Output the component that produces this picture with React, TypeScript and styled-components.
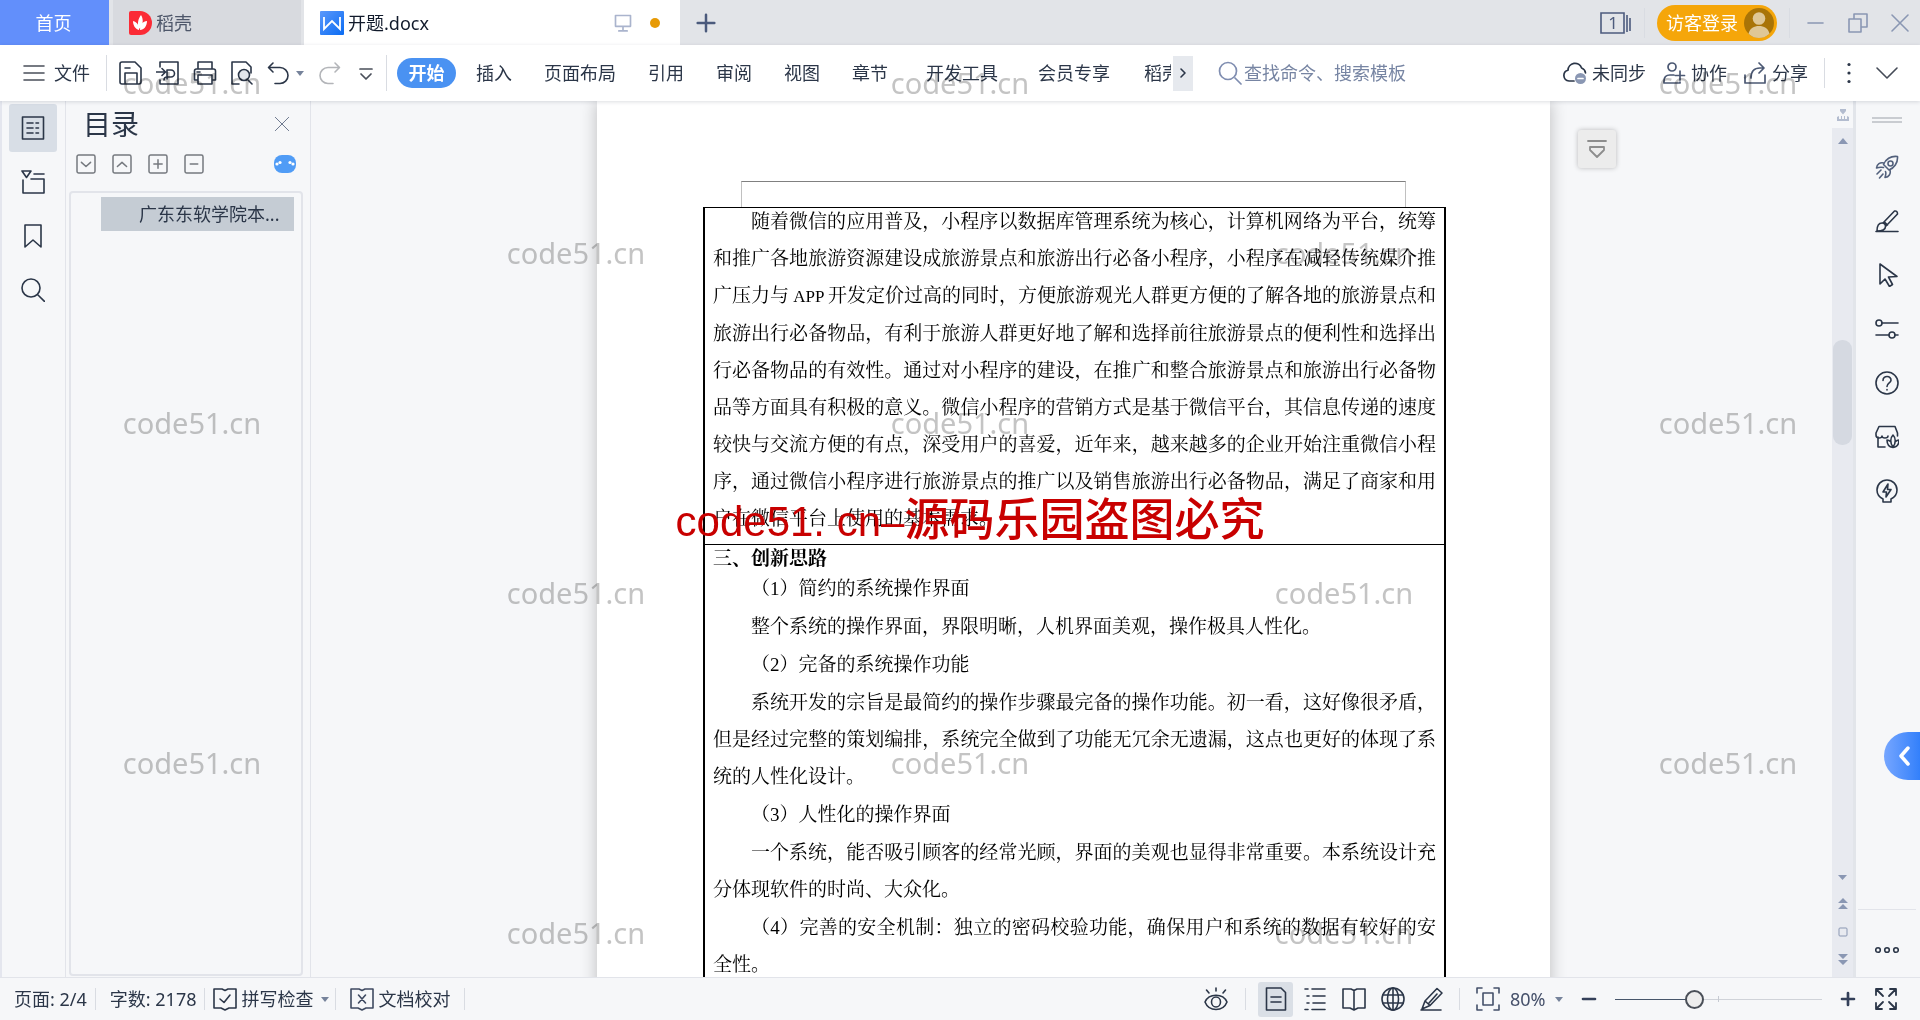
import React, { useState } from 'react';
import styled, { createGlobalStyle, css } from 'styled-components';

const ink = '#2b3648';
const slate = '#8a97b3';
const chrome = '#f6f7f9';
const line = '#e2e4ea';

const Global = createGlobalStyle`
  * { box-sizing: border-box; }
  body { margin: 0; font-family: "Noto Sans", "Noto Sans CJK SC", sans-serif; font-size: 18px; color: ${ink}; }
  button, input, select { font: inherit; color: inherit; margin: 0; }
`;

const plainButton = css`
  display: inline-flex;
  align-items: center;
  padding: 0;
  border: 0;
  background: none;
  cursor: pointer;
  white-space: nowrap;
`;

const App = styled.div`
  position: relative;
  height: 100vh;
  display: flex;
  flex-direction: column;
  overflow: hidden;
  background: ${chrome};
  line-height: 24px;
`;

/* ---------- drawings ---------- */

const Svg = styled.svg<{ $tone?: string; $w?: number }>`
  flex: none;
  display: block;
  fill: none;
  stroke: ${(p) => p.$tone || ink};
  stroke-width: ${(p) => p.$w || 1.6};
  stroke-linejoin: round;
  stroke-linecap: round;
`;

type IconProps = { d?: string; size?: number; tone?: string; w?: number; children?: React.ReactNode };
const Icon = ({ d, size = 24, tone, w, children }: IconProps) => (
  <Svg width={size} height={size} viewBox="0 0 24 24" $tone={tone} $w={w} aria-hidden="true">
    {d && <path d={d} />}
    {children}
  </Svg>
);

const Caret = () => (
  <svg width="8" height="6" viewBox="0 0 8 6" aria-hidden="true">
    <path d="M0 1h8L4 6z" fill="#76839b" />
  </svg>
);

const Divider = styled.span<{ $h: number }>`
  flex: none;
  width: 1px;
  height: ${(p) => p.$h}px;
  background: #d9dce2;
`;

/* ---------- tab bar ---------- */

const TabBar = styled.header`
  flex: none;
  display: flex;
  height: 45px;
  background: #e2e4e8;
`;

const HomeTab = styled.button`
  ${plainButton}
  justify-content: center;
  width: 109px;
  padding-right: 2px;
  margin-right: 4px;
  background: #628ffb;
  color: #fff;
`;

const Tab = styled.button<{ $active?: boolean }>`
  ${plainButton}
  width: ${(p) => (p.$active ? 376 : 188)}px;
  gap: 4px;
  padding: 0 16px;
  margin-right: ${(p) => (p.$active ? 0 : 3)}px;
  background: ${(p) => (p.$active ? '#fff' : '#d8dadf')};
  color: ${(p) => (p.$active ? '#111a2b' : '#4d5669')};
`;

const TabEnd = styled.span`
  margin-left: auto;
  display: flex;
  align-items: center;
  gap: 17px;
  padding-right: 4px;
`;

const Dot = styled.i`
  width: 10px;
  height: 10px;
  border-radius: 50%;
  background: #e79a05;
`;

const AddTab = styled.button`
  ${plainButton}
  justify-content: center;
  width: 52px;
`;

const WindowTools = styled.div`
  margin-left: auto;
  display: flex;
  align-items: center;
  gap: 12px;
  padding-right: 8px;
`;

const LoginButton = styled.button`
  ${plainButton}
  justify-content: space-between;
  width: 120px;
  height: 36px;
  padding: 0 3px 0 9px;
  border-radius: 18px;
  background: #f5a60a;
  color: #fff;
`;

const WindowButtons = styled.div`
  display: flex;
  gap: 18px;
  margin-left: 2px;
`;

const IconButton = styled.button`
  ${plainButton}
  justify-content: center;
`;

/* ---------- ribbon ---------- */

const Ribbon = styled.nav`
  position: relative;
  z-index: 2;
  flex: none;
  display: flex;
  align-items: center;
  height: 56px;
  background: #fff;
  box-shadow: 0 1px 4px rgba(40, 50, 70, 0.16);
`;

const FileButton = styled.button`
  ${plainButton}
  gap: 8px;
  padding: 0 16px 0 22px;
`;

const QuickTools = styled.div`
  display: flex;
  align-items: center;
  gap: 13px;
  padding: 0 8px 0 12px;
`;

const UndoGroup = styled.div`
  display: flex;
  align-items: center;
  gap: 5px;
`;

const Menu = styled.div`
  display: flex;
  align-items: center;
  width: 774px;
  margin-left: 10px;
  overflow: hidden;
`;

const MenuItem = styled.button<{ $wide?: boolean }>`
  ${plainButton}
  flex: none;
  padding: 0 ${(p) => (p.$wide ? 18 : 16)}px 0 ${(p) => (p.$wide ? 22 : 16)}px;
`;

const ActiveItem = styled.button`
  ${plainButton}
  flex: none;
  justify-content: center;
  width: 59px;
  height: 30px;
  margin-right: 4px;
  border-radius: 15px;
  background: #4a92f2;
  color: #fff;
  font-weight: 700;
`;

const ScrollMenu = styled.button`
  ${plainButton}
  justify-content: center;
  width: 20px;
  height: 35px;
  margin-left: 2px;
  background: #e6e9ee;
`;

const SearchBox = styled.label`
  flex: 1;
  display: flex;
  align-items: center;
  gap: 2px;
  margin-left: 25px;
  min-width: 0;
`;

const SearchInput = styled.input`
  flex: 1;
  min-width: 0;
  padding: 0;
  border: 0;
  outline: 0;
  background: none;
  &::placeholder { color: #7785a3; opacity: 1; }
`;

const Actions = styled.div`
  display: flex;
  align-items: center;
  gap: 16px;
`;

const ActionButton = styled.button`
  ${plainButton}
  gap: 5px;
`;

const ActionEnd = styled.div`
  display: flex;
  align-items: center;
  gap: 14px;
  padding: 0 21px 0 12px;
`;

/* ---------- work area ---------- */

const Work = styled.div`
  flex: 1;
  min-height: 0;
  display: flex;
`;

const NavRail = styled.nav`
  flex: none;
  width: 66px;
  display: flex;
  flex-direction: column;
  gap: 6px;
  padding: 3px 8px 0 7px;
  border-left: 2px solid #e4e6ee;
  border-right: 1px solid ${line};
`;

const RailButton = styled.button<{ $active?: boolean }>`
  ${plainButton}
  justify-content: center;
  width: 48px;
  height: 48px;
  border-radius: 3px;
  background: ${(p) => (p.$active ? '#d8dee6' : 'none')};
`;

const Panel = styled.aside`
  flex: none;
  width: 245px;
  display: flex;
  flex-direction: column;
  padding: 0 7px 1px 3px;
  border-right: 1px solid ${line};
`;

const PanelHead = styled.div`
  display: flex;
  align-items: center;
  justify-content: space-between;
  height: 46px;
  padding: 0 13px 0 14px;
`;

const PanelTitle = styled.h2`
  margin: 0;
  font-size: 28px;
  line-height: 40px;
  font-weight: 400;
`;

const PanelTools = styled.div`
  display: flex;
  align-items: center;
  gap: 16px;
  height: 44px;
  padding: 0 7px 10px;
  & > :last-child { margin-left: auto; }
`;

const Outline = styled.ul`
  flex: 1;
  margin: 0;
  padding: 4px 7px 0 30px;
  list-style: none;
  border: 2px solid ${line};
  border-radius: 4px;
`;

const OutlineItem = styled.li`
  height: 34px;
  padding: 0 8px 0 38px;
  background: #c5ccd4;
  line-height: 34px;
  white-space: nowrap;
`;

const Canvas = styled.main`
  position: relative;
  flex: 1;
  min-width: 0;
  overflow: hidden;
  padding-left: 4px;
`;

const Page = styled.article`
  width: 953px;
  min-height: 100%;
  margin: 0 auto;
  padding: 80px 144px 60px;
  background: #fff;
  box-shadow: 0 0 16px rgba(0, 0, 0, 0.24);
`;

const HeaderArea = styled.div`
  height: 26px;
  border: 1px solid #c0c0c0;
  border-top-color: #808080;
  border-bottom: 0;
`;

const DocTable = styled.table`
  width: calc(100% + 75px);
  margin: 0 -38px;
  border: 2px solid #000;
  border-top-width: 1px;
  border-spacing: 0;
  color: #000;
  font-family: "Liberation Serif", "Noto Serif CJK SC", "Noto Sans CJK SC", serif;
  font-size: 19px;
  line-height: 25px;
`;

const Cell = styled.td`
  padding: 1px 8px 13px;
  border-bottom: 1px solid #000;
`;

const Heading = styled.h3`
  margin: 0 0 5px;
  font-size: 19px;
  font-weight: 700;
`;

const Para = styled.p`
  display: flex;
  flex-direction: column;
  gap: 12px;
  margin: 0 0 13px;
  white-space: nowrap;
  &:last-child { margin-bottom: 0; }
`;

const Row = styled.span<{ $indent?: boolean; $full?: boolean }>`
  display: block;
  text-indent: ${(p) => (p.$indent ? '2em' : '0')};
  text-align-last: ${(p) => (p.$full ? 'justify' : 'left')};
`;

const Latin = styled.span`
  font-size: 17px;
`;

const FloatButton = styled.button`
  ${plainButton}
  position: absolute;
  top: 29px;
  right: 216px;
  justify-content: center;
  width: 38px;
  height: 38px;
  border-radius: 3px;
  background: #ececec;
  box-shadow: 0 0 5px rgba(0, 0, 0, 0.25);
`;

const ScrollColumn = styled.div`
  flex: none;
  display: flex;
  flex-direction: column;
  align-items: center;
  width: 24px;
  border-right: 3px solid #e2e5ea;
`;

const RulerToggle = styled.button`
  ${plainButton}
  justify-content: center;
  width: 100%;
  height: 27px;
`;

const Track = styled.div`
  flex: 1;
  display: flex;
  flex-direction: column;
  align-items: center;
  width: 100%;
  padding: 10px 0 11px;
  background: #e8eaf0;
`;

const Thumb = styled.div`
  width: 19px;
  height: 105px;
  margin-top: 196px;
  border-radius: 9px;
  background: #d5d9e1;
`;

const PageSteps = styled.div`
  margin-top: auto;
  display: flex;
  flex-direction: column;
  align-items: center;
  gap: 17px;
`;

const SideRail = styled.aside`
  flex: none;
  display: flex;
  flex-direction: column;
  align-items: center;
  width: 64px;
  padding: 16px 2px 0 0;
`;

const Grip = styled.i`
  width: 30px;
  height: 6px;
  margin-bottom: 17px;
  border: solid #c9ccd1;
  border-width: 2px 0;
`;

const SideTool = styled.button`
  ${plainButton}
  justify-content: center;
  width: 48px;
  height: 54px;
`;

const Drawer = styled.button`
  ${plainButton}
  align-self: flex-end;
  justify-content: center;
  width: 36px;
  height: 48px;
  margin: 214px -2px 0 0;
  padding-left: 6px;
  border-radius: 24px 0 0 24px;
  background: linear-gradient(90deg, #76a6ff, #3380fb);
`;

const SideFoot = styled.div`
  display: flex;
  justify-content: center;
  align-items: center;
  width: 58px;
  height: 68px;
  margin-top: auto;
  padding-top: 12px;
  border-top: 1px solid ${line};
`;

/* ---------- status bar ---------- */

const StatusBar = styled.footer`
  flex: none;
  display: flex;
  align-items: center;
  justify-content: space-between;
  height: 43px;
  border-top: 1px solid ${line};
`;

const StatusGroup = styled.div<{ $gap: number }>`
  display: flex;
  align-items: center;
  gap: ${(p) => p.$gap}px;
`;

const StatusItem = styled.button`
  ${plainButton}
  gap: 4px;
  padding: 0 14px;
`;

const CountItem = styled(StatusItem)`
  padding-right: 8px;
`;

const CheckItem = styled(StatusItem)`
  padding: 0 6px 0 8px;
  & > :last-child { margin-left: 4px; }
`;

const ViewButton = styled.button<{ $active?: boolean }>`
  ${plainButton}
  justify-content: center;
  width: 35px;
  height: 35px;
  border-radius: 3px;
  background: ${(p) => (p.$active ? '#dadfe6' : 'none')};
`;

const ZoomPick = styled.label`
  display: flex;
  align-items: center;
  gap: 7px;
`;

const ZoomSelect = styled.select`
  appearance: none;
  width: 38px;
  padding: 0;
  border: 0;
  background: none;
  color: #45506a;
`;

const ZoomSlider = styled.input`
  appearance: none;
  width: 207px;
  height: 20px;
  background:
    linear-gradient(#c6cad2, #c6cad2) 50% 50% / 1px 6px no-repeat,
    linear-gradient(90deg, #47566b 38%, #d0d3d9 38%) 0 50% / 100% 1px no-repeat;
  &::-webkit-slider-thumb {
    appearance: none;
    width: 19px;
    height: 19px;
    border: 2px solid #4a4f58;
    border-radius: 50%;
    background: #ededed;
  }
`;

const RightStatus = styled.div`
  display: flex;
  align-items: center;
  gap: 18px;
  padding-right: 22px;
`;

/* ---------- overlays ---------- */

const MarkGrid = styled.div`
  position: absolute;
  inset: -2px 0 2px;
  z-index: 5;
  display: grid;
  grid-template-columns: repeat(5, 1fr);
  grid-template-rows: repeat(6, 1fr);
  place-items: center;
  pointer-events: none;
  mix-blend-mode: multiply;
  color: #c4c4c4;
  font-size: 29px;
  line-height: 32px;
`;

const Notice = styled.div`
  position: absolute;
  z-index: 6;
  top: 51%;
  left: 50%;
  transform: translate(-50%, -50%);
  padding: 2px 0 0 20px;
  pointer-events: none;
  white-space: nowrap;
  color: #c80000;
  font-family: "Liberation Sans", "Noto Sans CJK SC", sans-serif;
  font-size: 42px;
  line-height: 56px;
`;

const NoticeHan = styled.span`
  font-size: 45px;
  font-weight: 500;
`;

const marks = Array.from({ length: 30 }, (_, i) => {
  const row = Math.floor(i / 5);
  const col = i % 5;
  return row % 2 === 0 ? col % 2 === 0 : col % 2 === 1;
});

const firstRows = [
  '随着微信的应用普及，小程序以数据库管理系统为核心，计算机网络为平台，统筹',
  '和推广各地旅游资源建设成旅游景点和旅游出行必备小程序，小程序在减轻传统媒介推',
  <>广压力与<Latin> APP </Latin>开发定价过高的同时，方便旅游观光人群更方便的了解各地的旅游景点和</>,
  '旅游出行必备物品，有利于旅游人群更好地了解和选择前往旅游景点的便利性和选择出',
  '行必备物品的有效性。通过对小程序的建设，在推广和整合旅游景点和旅游出行必备物',
  '品等方面具有积极的意义。微信小程序的营销方式是基于微信平台，其信息传递的速度',
  '较快与交流方便的有点，深受用户的喜爱，近年来，越来越多的企业开始注重微信小程',
  '序，通过微信小程序进行旅游景点的推广以及销售旅游出行必备物品，满足了商家和用',
  '户在微信平台上使用的基本需求。',
];

const secondParas = [
  ['（1）简约的系统操作界面'],
  ['整个系统的操作界面，界限明晰，人机界面美观，操作极具人性化。'],
  ['（2）完备的系统操作功能'],
  [
    '系统开发的宗旨是最简约的操作步骤最完备的操作功能。初一看，这好像很矛盾，',
    '但是经过完整的策划编排，系统完全做到了功能无冗余无遗漏，这点也更好的体现了系',
    '统的人性化设计。',
  ],
  ['（3）人性化的操作界面'],
  ['一个系统，能否吸引顾客的经常光顾，界面的美观也显得非常重要。本系统设计充', '分体现软件的时尚、大众化。'],
  ['（4）完善的安全机制：独立的密码校验功能，确保用户和系统的数据有较好的安', '全性。'],
];

const Paragraph = ({ rows }: { rows: React.ReactNode[] }) => (
  <Para>
    {rows.map((row, i) => (
      <Row key={i} $indent={i === 0} $full={i < rows.length - 1}>
        {row}
      </Row>
    ))}
  </Para>
);

const menuItems = [
  { label: '插入' },
  { label: '页面布局' },
  { label: '引用' },
  { label: '审阅' },
  { label: '视图' },
  { label: '章节' },
  { label: '开发工具', wide: true },
  { label: '会员专享', wide: true },
  { label: '稻壳资源' },
];

const SquareIcon = ({ d }: { d: string }) => (
  <Icon size={20} tone="#75797f" w={1.8}>
    <rect x="1.2" y="1.2" width="21.6" height="21.6" rx="2" />
    <path d={d} />
  </Icon>
);

export default function WriterApp() {
  const [zoom, setZoom] = useState(37);
  return (
    <App>
      <Global />
      <TabBar>
        <HomeTab>首页</HomeTab>
        <Tab>
          <svg width="23" height="24" viewBox="0 0 23 24" aria-hidden="true">
            <path d="M0 2q0-2 2-2h9a12 12 0 0 1 0 24H2q-2 0-2-2z" fill="#fb2b36" />
            <path d="M12 4c-3 4-4 9-2 14 4-4 5-9 2-14zM4 10c0 4 2 8 6 9 1-4-2-8-6-9zM18 10c-4 0-7 4-7 9 4 0 7-4 7-9z" fill="#fff" />
          </svg>
          稻壳
        </Tab>
        <Tab $active>
          <svg width="24" height="24" viewBox="0 0 24 24" aria-hidden="true">
            <defs>
              <linearGradient id="writer" x1="0" y1="0" x2="1" y2="1">
                <stop offset="0" stopColor="#5b98fb" />
                <stop offset="1" stopColor="#0a6cf3" />
              </linearGradient>
            </defs>
            <rect width="24" height="24" rx="1" fill="url(#writer)" />
            <path d="M4 6v12l8-8 8 8V6" fill="none" stroke="#fff" strokeWidth="1.8" />
          </svg>
          开题.docx
          <TabEnd>
            <Icon size={20} tone="#aab4cd" w={2} d="M3 3h18v13H3zM12 16v5M7 21.500h10" />
            <Dot />
          </TabEnd>
        </Tab>
        <AddTab aria-label="新建">
          <Icon size={20} tone="#4b5a7c" w={3} d="M12 2v20M2 12h20" />
        </AddTab>
        <WindowTools>
          <IconButton aria-label="窗口">
            <svg width="32" height="24" viewBox="0 0 32 24" aria-hidden="true">
              <path d="M1 2h23v20H1zM27 4v17M30 7v13" fill="none" stroke="#4d5b7d" strokeWidth="1.600" />
              <text x="13" y="18" fontSize="17" textAnchor="middle" fill="#4d5b7d">1</text>
            </svg>
          </IconButton>
          <Divider $h={30} />
          <LoginButton>
            访客登录
            <svg width="30" height="30" viewBox="0 0 30 30" aria-hidden="true">
              <circle cx="15" cy="15" r="15" fill="#a97407" />
              <circle cx="15" cy="10.500" r="6.300" fill="#dfc796" />
              <path d="M4.500 25.700C6 20 10 18 15 18s9 2 10.500 7.700A15 15 0 0 1 4.500 25.700z" fill="#dfc796" />
            </svg>
          </LoginButton>
          <Divider $h={30} />
          <WindowButtons>
            <IconButton aria-label="最小化"><Icon tone={slate} d="M4 12h15" /></IconButton>
            <IconButton aria-label="还原"><Icon tone={slate} d="M3 8h12v13H3zM8 8V3h13v13h-6" /></IconButton>
            <IconButton aria-label="关闭"><Icon tone={slate} d="M4 4l16 16M20 4L4 20" /></IconButton>
          </WindowButtons>
        </WindowTools>
      </TabBar>

      <Ribbon>
        <FileButton>
          <Icon tone="#4a4f5a" w={1.6} d="M2 5h20M2 12h20M2 19h20" />
          文件
        </FileButton>
        <Divider $h={36} />
        <QuickTools>
          <IconButton aria-label="保存"><Icon d="M1 3q0-2 2-2h13l6 6v14q0 2-2 2H3q-2 0-2-2zM6 23V12h12v11M6 7h5" /></IconButton>
          <IconButton aria-label="输出为PDF"><Icon d="M4 6V1h18v22H4v-4M0 11h9M6 7.500L9.500 11 6 14.500M11 18v-9h4a3.500 3.500 0 0 1 0 7h-4q-3 0-3 3" /></IconButton>
          <IconButton aria-label="打印"><Icon d="M5 8V1h14v7M5 19H1.500v-9q0-2 2-2h17q2 0 2 2v9H19M5 14h14v9H5zM4 11h3" /></IconButton>
          <IconButton aria-label="打印预览">
            <Icon d="M9 23H2V1h14l5 5v6M18 19l4 4"><circle cx="14" cy="14" r="5.500" fill="#e2e6ec" /></Icon>
          </IconButton>
          <UndoGroup>
            <IconButton aria-label="撤销"><Icon d="M6 2L1.500 6.500 6 11M2 6.500h11a8 8 0 0 1 0 16H8" /></IconButton>
            <Caret />
          </UndoGroup>
          <IconButton aria-label="恢复"><Icon tone="#b3b5b9" d="M18 2l4.500 4.500L18 11M22 6.500H11a8 8 0 0 0 0 16h5" /></IconButton>
          <IconButton aria-label="更多工具"><Icon tone="#4a4f5a" w={1.7} d="M6 8h12M7 13l5 5 5-5" /></IconButton>
        </QuickTools>
        <Divider $h={36} />
        <Menu>
          <ActiveItem>开始</ActiveItem>
          {menuItems.map((m) => (
            <MenuItem key={m.label} $wide={m.wide}>{m.label}</MenuItem>
          ))}
        </Menu>
        <ScrollMenu aria-label="更多选项卡"><Icon size={16} w={2.400} d="M9 6l6 6-6 6" /></ScrollMenu>
        <SearchBox>
          <Icon tone="#7f8db0" w={1.700} d="M17 17l6 6"><circle cx="10" cy="10" r="8.500" /></Icon>
          <SearchInput aria-label="搜索" placeholder="查找命令、搜索模板" />
        </SearchBox>
        <Actions>
          <ActionButton>
            <Icon w={1.700}>
              <path d="M11 20H6A5.500 5.500 0 0 1 5 9.200 7 7 0 0 1 18.600 7 6 6 0 0 1 22.500 12" />
              <circle cx="17.500" cy="17.500" r="5.500" fill={slate} stroke="none" />
              <path d="M15 17.500h5" stroke="#fff" />
            </Icon>
            未同步
          </ActionButton>
          <ActionButton>
            <Icon w={1.700} tone="#4b5873" d="M14 22H2v-2q0-6 6-6h4M18 10v9M13.500 14.500h9M14 22h4v-1"><circle cx="10" cy="6" r="4" /></Icon>
            协作
          </ActionButton>
          <ActionButton>
            <Icon w={1.700} tone="#4b5873" d="M2 14v8h20v-8M16 2l5 5-5 5M20 7h-3q-9 0-9 10" />
            分享
          </ActionButton>
          <Divider $h={30} />
        </Actions>
        <ActionEnd>
          <IconButton aria-label="更多">
            <Icon><g fill={ink} stroke="none"><circle cx="12" cy="3.500" r="1.600" /><circle cx="12" cy="12" r="1.600" /><circle cx="12" cy="20.500" r="1.600" /></g></Icon>
          </IconButton>
          <IconButton aria-label="收起功能区"><Icon tone="#454b57" d="M2 7l10 10L22 7" /></IconButton>
        </ActionEnd>
      </Ribbon>

      <Work>
        <NavRail>
          <RailButton $active aria-label="目录">
            <Icon d="M1.500 1h21v22h-21zM6 7h6M15 7h2.500M6 12h6M15 12h2.500M6 17h6M15 17h2.500" />
          </RailButton>
          <RailButton aria-label="章节导航">
            <Icon d="M1 1h9L5.500 7.500zM13 4h10M2 10v13h21V9H10" />
          </RailButton>
          <RailButton aria-label="书签"><Icon d="M4 1h16v22l-8-7-8 7z" /></RailButton>
          <RailButton aria-label="查找"><Icon d="M17 17l6.500 6.500"><circle cx="10" cy="10" r="9" /></Icon></RailButton>
        </NavRail>

        <Panel>
          <PanelHead>
            <PanelTitle>目录</PanelTitle>
            <IconButton aria-label="关闭目录"><Icon size={16} tone="#6f7a90" w={1.500} d="M2 2l20 20M22 2L2 22" /></IconButton>
          </PanelHead>
          <PanelTools>
            <IconButton aria-label="展开"><SquareIcon d="M6.500 10l5.500 5 5.500-5" /></IconButton>
            <IconButton aria-label="收起"><SquareIcon d="M6.500 15l5.500-5 5.500 5" /></IconButton>
            <IconButton aria-label="增加级别"><SquareIcon d="M12 7v10M7 12h10" /></IconButton>
            <IconButton aria-label="减少级别"><SquareIcon d="M7.500 12h9" /></IconButton>
            <IconButton aria-label="智能识别目录">
              <svg width="22" height="18" viewBox="0 0 22 18" aria-hidden="true">
                <rect width="22" height="18" rx="8" fill="#509cf6" />
                <g fill="#fff"><circle cx="3" cy="9" r="1.600" /><circle cx="6" cy="7.500" r="1.600" /><circle cx="16" cy="7.500" r="1.600" /><circle cx="19" cy="9" r="1.600" /></g>
              </svg>
            </IconButton>
          </PanelTools>
          <Outline>
            <OutlineItem>广东东软学院本...</OutlineItem>
          </Outline>
        </Panel>

        <Canvas>
          <Page>
            <HeaderArea />
            <DocTable>
              <tbody>
                <tr>
                  <Cell>
                    <Paragraph rows={firstRows} />
                  </Cell>
                </tr>
                <tr>
                  <Cell>
                    <Heading>三、创新思路</Heading>
                    {secondParas.map((rows, i) => (
                      <Paragraph key={i} rows={rows} />
                    ))}
                  </Cell>
                </tr>
              </tbody>
            </DocTable>
          </Page>
          <FloatButton aria-label="展开工具">
            <Icon tone="#8d8d8d" w={1.800} d="M3 4h18M5 10h14v3l-7 7-7-7z" />
          </FloatButton>
        </Canvas>

        <ScrollColumn>
          <RulerToggle aria-label="标尺">
            <svg width="12" height="12" viewBox="0 0 12 12" fill="#b3bccf" aria-hidden="true">
              <path d="M3 0h6v2L6 5.500 3 2zM0 8l2-1v3h2V7h1v3h2V7h1v3h2V7l2 1v4H0z" />
            </svg>
          </RulerToggle>
          <Track>
            <svg width="10" height="6" viewBox="0 0 10 6" fill={slate} aria-hidden="true"><path d="M5 0l5 6H0z" /></svg>
            <Thumb />
            <PageSteps>
              <svg width="9" height="6" viewBox="0 0 9 6" fill={slate} aria-hidden="true"><path d="M0 0h9L4.500 5z" /></svg>
              <svg width="10" height="12" viewBox="0 0 10 12" fill={slate} aria-hidden="true"><path d="M5 0l5 5H0zM5 6l5 5H0z" /></svg>
              <svg width="10" height="10" viewBox="0 0 10 10" fill="none" stroke={slate} aria-hidden="true"><rect x="1" y="1" width="8" height="8" rx="1" /></svg>
              <svg width="10" height="12" viewBox="0 0 10 12" fill={slate} aria-hidden="true"><path d="M0 0h10L5 5zM0 6h10l-5 5z" /></svg>
            </PageSteps>
          </Track>
        </ScrollColumn>

        <SideRail>
          <Grip />
          <SideTool aria-label="快捷操作">
            <Icon tone="#52607c" d="M22.500 1.500c-7-1-12 3-14 8l5.500 5.500c5-2 9-7 8.500-13.500zM9 8c-4-1-7 1-7.500 5 3-1 5-1 7-.500M15 15c1 4-1 7-5 7.500 1-3 1-5 .500-6M6 15l-4 4M8 19l-3.500 4"><circle cx="15.500" cy="8.500" r="2.500" /></Icon>
          </SideTool>
          <SideTool aria-label="样式">
            <Icon d="M1 22.500h22M2 22c0-5 1-8 5-8 2 0 3.500 1.500 3.500 3.500C10.500 21 6 22 2 22zM8 14L19.500 2q3-.500 3 3L11 17M9.500 13l3 3" />
          </SideTool>
          <SideTool aria-label="选择"><Icon d="M5 1v20l5-5 4.500 7.500 3-2L13.500 14l8.500-.500z" /></SideTool>
          <SideTool aria-label="设置">
            <Icon d="M7 6h16M1 18h13M20 18h3"><circle cx="4" cy="6" r="3" /><circle cx="17" cy="18" r="3" /></Icon>
          </SideTool>
          <SideTool aria-label="帮助">
            <Icon d="M8 9.500c0-5.500 8.500-5 8 0-.300 2.500-4 2.500-4 6M12 18.500v.500"><circle cx="12" cy="12" r="11" /></Icon>
          </SideTool>
          <SideTool aria-label="资源">
            <Icon d="M10 22H3V12M1 8l3-6.500h16L22.500 8v3M1 8v2q0 3 3 3t3-2q0 2 3 2t3-2M18 10c-3 3-3 8 0 12 3-4 3-9 0-12zM12 15c0 4 2 7 6 7.500M12 15c2 0 3 1 4 2M24 15c0 4-2 7-6 7.500M24 15c-2 0-3 1-4 2" />
          </SideTool>
          <SideTool aria-label="灵感">
            <Icon d="M8 20C4 18 2 15 2 11a10 10 0 0 1 20 0c0 4-2 7-6 9v3H8zM13 5l-5 8h3.500L11 18l5-7.500h-3.500z" />
          </SideTool>
          <Drawer aria-label="展开侧栏"><Icon tone="#fff" w={3.500} d="M15 4l-7 8 7 8" /></Drawer>
          <SideFoot>
            <IconButton aria-label="更多功能">
              <Icon><circle cx="3" cy="12" r="2.300" /><circle cx="12" cy="12" r="2.300" /><circle cx="21" cy="12" r="2.300" /></Icon>
            </IconButton>
          </SideFoot>
        </SideRail>
      </Work>

      <StatusBar>
        <StatusGroup $gap={0}>
          <CountItem>页面: 2/4</CountItem>
          <Divider $h={22} />
          <CountItem>字数: 2178</CountItem>
          <Divider $h={22} />
          <CheckItem>
            <Icon d="M1 2h8l3 1.500L15 2h8v19h-7l-4 2-4-2H1zM7 12l4 3.500L17 8" />
            拼写检查
            <Caret />
          </CheckItem>
          <Divider $h={22} />
          <StatusItem>
            <Icon tone="#3f4a61" d="M1 2h8l3 1.500L15 2h8v19h-7l-4 2-4-2H1zM8.500 8l7 8M15.500 8l-7 8" />
            文档校对
          </StatusItem>
          <Divider $h={22} />
        </StatusGroup>
        <RightStatus>
          <StatusGroup $gap={12}>
            <ViewButton aria-label="护眼模式">
              <Icon d="M1 15C5 6 19 6 23 15 19 25 5 25 1 15zM12 1v3M2.500 3L5 6M21.500 3L19 6"><ellipse cx="12" cy="15" rx="4.500" ry="5" /></Icon>
            </ViewButton>
            <Divider $h={22} />
            <StatusGroup $gap={10}>
              <StatusGroup $gap={4}>
                <ViewButton $active aria-label="页面视图"><Icon d="M2.500 1H17l4.500 4.500V23h-19zM7 10h10M7 15h10" /></ViewButton>
                <ViewButton aria-label="大纲"><Icon d="M2 2h3M9 2h13M4 9h2M10 9h12M4 16h2M10 16h12M2 22.500h3M9 22.500h13" /></ViewButton>
                <ViewButton aria-label="阅读版式"><Icon d="M12 3v20M1 2h8l3 1.500L15 2h8v19h-7l-4 2-4-2H1z" /></ViewButton>
                <ViewButton aria-label="网页版式">
                  <Icon d="M12 1v22M2 8h20M2 16h20"><circle cx="12" cy="12" r="11" /><ellipse cx="12" cy="12" rx="5.500" ry="11" /></Icon>
                </ViewButton>
                <ViewButton aria-label="写作模式"><Icon d="M1 23h20M2 22l3-8L17 1.500 22 6 10 18.500 2 22zM5 14l5 4.500M9 16l8-9" /></ViewButton>
              </StatusGroup>
              <Divider $h={22} />
              <StatusGroup $gap={5}>
                <ViewButton aria-label="适合宽度"><Icon tone="#44506a" d="M1 6V1h5M18 1h5v5M23 18v5h-5M6 23H1v-5M7 6h10v12H7z" /></ViewButton>
                <ZoomPick>
                  <ZoomSelect aria-label="显示比例" defaultValue="80%">
                    <option>80%</option>
                    <option>100%</option>
                  </ZoomSelect>
                  <Caret />
                </ZoomPick>
              </StatusGroup>
            </StatusGroup>
          </StatusGroup>
          <IconButton aria-label="缩小"><Icon size={16} tone="#34405a" w={4} d="M3 12h18" /></IconButton>
          <ZoomSlider
            type="range"
            aria-label="缩放"
            min={0}
            max={100}
            value={zoom}
            onChange={(e) => setZoom(Number(e.target.value))}
          />
          <IconButton aria-label="放大"><Icon size={16} tone="#34405a" w={4} d="M3 12h18M12 3v18" /></IconButton>
          <IconButton aria-label="全屏"><Icon w={1.800} d="M2 8V2h6M2 2l7 7M16 2h6v6M22 2l-7 7M2 16v6h6M2 22l7-7M22 16v6h-6M22 22l-7-7" /></IconButton>
        </RightStatus>
      </StatusBar>

      <MarkGrid>
        {marks.map((on, i) => (
          <span key={i}>{on ? 'code51.cn' : ''}</span>
        ))}
      </MarkGrid>
      <Notice>
        code51. cn–<NoticeHan>源码乐园盗图必究</NoticeHan>
      </Notice>
    </App>
  );
}
